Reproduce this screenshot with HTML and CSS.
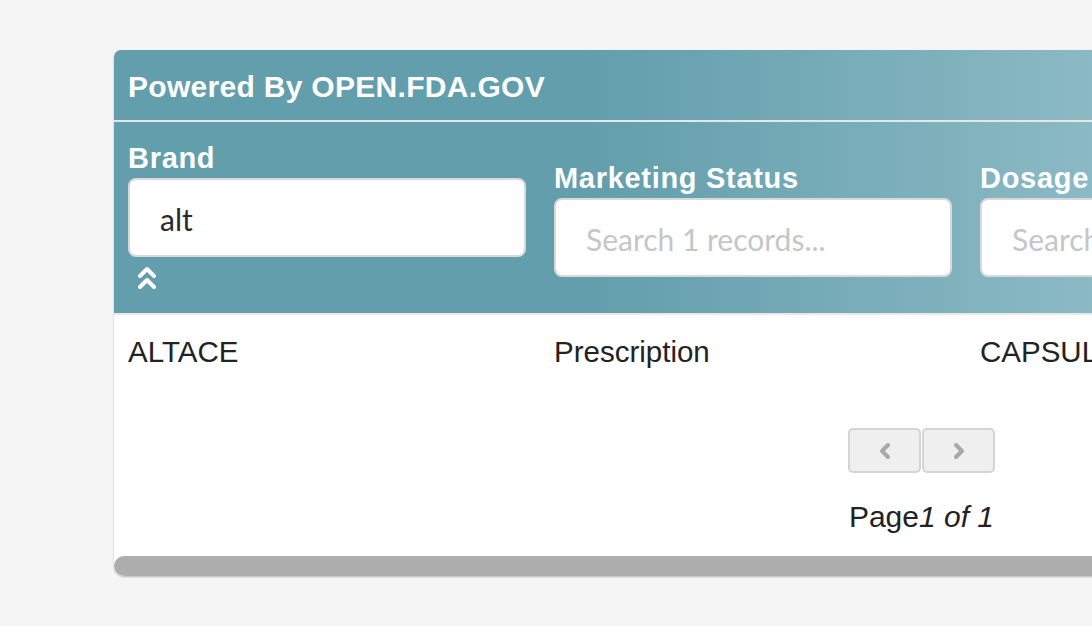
FILE: index.html
```html
<!DOCTYPE html>
<html lang="en">
<head>
<meta charset="utf-8">
<title>OpenFDA Drugs</title>
<link rel="stylesheet" href="styles.css">
</head>
<body>
<div class="card">
  <div class="head">
    <div class="title">Powered By OPEN.FDA.GOV</div>
    <div class="filters">
      <div class="col">
        <label class="label">Brand</label>
        <div class="input value">alt</div>
        <div class="collapse">
          <svg width="20" height="26" viewBox="0 0 20 26" fill="none" stroke="#fff" stroke-width="4" stroke-linecap="round" stroke-linejoin="round"><path d="M3 11 L10 4 L17 11"/><path d="M3 22 L10 15 L17 22"/></svg>
        </div>
      </div>
      <div class="col">
        <label class="label">Marketing Status</label>
        <div class="input placeholder">Search 1 records...</div>
      </div>
      <div class="col">
        <label class="label">Dosage Form</label>
        <div class="input placeholder">Search 1 records...</div>
      </div>
      <div class="col">
        <label class="label">Route</label>
        <div class="input placeholder">Search 1 records...</div>
      </div>
    </div>
  </div>
  <div class="row">
    <div class="cell">ALTACE</div>
    <div class="cell">Prescription</div>
    <div class="cell">CAPSULE</div>
    <div class="cell">ORAL</div>
  </div>
  <div class="pager">
    <div class="buttons">
      <button class="btn" aria-label="Previous">
        <svg width="14" height="18" viewBox="0 0 14 18" fill="none" stroke="#a8a8a8" stroke-width="4" stroke-linecap="round" stroke-linejoin="round"><path d="M10 3 L4 9 L10 15"/></svg>
      </button>
      <button class="btn" aria-label="Next">
        <svg width="14" height="18" viewBox="0 0 14 18" fill="none" stroke="#a8a8a8" stroke-width="4" stroke-linecap="round" stroke-linejoin="round"><path d="M4 3 L10 9 L4 15"/></svg>
      </button>
    </div>
    <div class="pageinfo">Page<em>1 of 1</em></div>
  </div>
  <div class="scrollbar"></div>
</div>
</body>
</html>
```

FILE: styles.css
```css
html, body {
  margin: 0;
  padding: 0;
}
body {
  background: #f5f5f5;
  overflow: hidden;
  height: 626px;
  font-family: "Liberation Sans", Arial, sans-serif;
}
.card {
  margin: 50px 0 0 114px;
  width: 1615px;
  background: #fff;
  border-radius: 7px 7px 10px 10px;
  box-shadow: 0 1px 2px rgba(0, 0, 0, 0.25);
  overflow: hidden;
}
.head {
  background: linear-gradient(to right, #629eab 0px, #629eab 470px, #8cbac5 990px, #a4c9d2 1500px);
  border-bottom: 2px solid #e9e9e9;
}
.title {
  height: 68px;
  padding-top: 2px;
  line-height: 70px;
  padding-left: 14px;
  color: #fff;
  font-weight: bold;
  font-size: 30px;
  letter-spacing: 0.3px;
  border-bottom: 2px solid #e6e6e6;
}
.filters {
  display: flex;
  align-items: flex-end;
  padding: 0 0 36px 14px;
  height: 155px;
}
.col {
  flex: none;
  width: 398px;
  margin-right: 28px;
  display: flex;
  flex-direction: column;
}
.label {
  color: #fff;
  font-weight: bold;
  font-size: 29px;
  letter-spacing: 0.7px;
  line-height: 32px;
  margin-bottom: 4px;
}
.input {
  box-sizing: border-box;
  height: 79px;
  background: #fff;
  border: 2px solid #d9d9d9;
  border-radius: 8px;
  padding: 3px 0 0 30px;
  font-family: Lato, "Liberation Sans", sans-serif;
  font-size: 30px;
  line-height: 72px;
  white-space: nowrap;
  overflow: hidden;
}
.value {
  color: #2a2a2a;
}
.placeholder {
  color: #c6c6c6;
}
.collapse {
  height: 20px;
  padding-left: 9px;
}
.collapse svg {
  display: block;
  margin-top: 8px;
}
.row {
  display: flex;
  padding: 20px 0 0 14px;
}
.cell {
  flex: none;
  width: 426px;
  font-size: 29.5px;
  line-height: 34px;
  color: #222;
}
.pager {
  padding-top: 59px;
  text-align: center;
}
.buttons {
  display: flex;
  justify-content: center;
  gap: 1px;
}
.btn {
  box-sizing: border-box;
  width: 73px;
  height: 45px;
  background: #efefef;
  border: 2px solid #d4d4d4;
  border-radius: 5px;
  padding: 0;
  display: flex;
  align-items: center;
  justify-content: center;
}
.pageinfo {
  margin-top: 26px;
  font-size: 30px;
  line-height: 36px;
  color: #222;
}
.pageinfo em {
  font-style: italic;
}
.scrollbar {
  margin-top: 21px;
  height: 20px;
  background: #adadad;
  border-radius: 10px;
}
```
